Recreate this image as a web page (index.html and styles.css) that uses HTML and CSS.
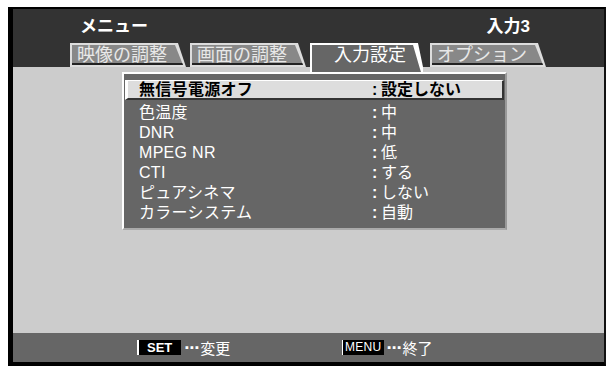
FILE: index.html
```html
<!DOCTYPE html>
<html lang="ja">
<head>
  <meta charset="UTF-8" />
  <title>メニュー</title>
  <link rel="stylesheet" href="styles.css">
</head>
<body>

<div class="screen">

  <!-- Title row -->
  <div class="header">
    <span class="title">メニュー</span>
    <span class="input">入力3</span>
  </div>

  <!-- Tabs -->
  <div class="tabs">
    <div class="tab"><span>映像の調整</span></div>
    <div class="tab"><span>画面の調整</span></div>
    <div class="tab active"><span>入力設定</span></div>
    <div class="tab"><span>オプション</span></div>
  </div>

  <!-- Settings list -->
  <div class="content">
    <div class="panel">
      <div class="row selected"><span class="name">無信号電源オフ</span><span class="colon">:</span><span>設定しない</span></div>
      <div class="row"><span class="name">色温度</span><span class="colon">:</span><span>中</span></div>
      <div class="row"><span class="name">DNR</span><span class="colon">:</span><span>中</span></div>
      <div class="row"><span class="name">MPEG NR</span><span class="colon">:</span><span>低</span></div>
      <div class="row"><span class="name">CTI</span><span class="colon">:</span><span>する</span></div>
      <div class="row"><span class="name">ピュアシネマ</span><span class="colon">:</span><span>しない</span></div>
      <div class="row"><span class="name">カラーシステム</span><span class="colon">:</span><span>自動</span></div>
    </div>
  </div>

  <!-- Key guide -->
  <div class="footer">
    <div class="hint"><span class="key set">SET</span><span class="dots">⋯</span>変更</div>
    <div class="hint"><span class="key menu">MENU</span><span class="dots">⋯</span>終了</div>
  </div>

</div>

</body>
</html>
```

FILE: styles.css
```css
body {
  margin: 0;
  background: #fff;
  font-family: "Liberation Sans", "Noto Sans CJK JP", sans-serif;
}

.screen {
  margin: 7px 0 0 8px;
  width: 591px;
  background: #333;
  border-left: 5px solid #000;
  border-top: 2px solid #000;
  border-right: 2px solid #111;
  border-bottom: 4px solid #000;
}

.header {
  display: flex;
  justify-content: space-between;
  align-items: center;
  height: 30px;
  padding: 0 74px 4px 67px;
  color: #fff;
  font-size: 17px;
  font-weight: bold;
}

/* Tabs */
.tabs {
  display: flex;
  gap: 4px;
  height: 24px;
  padding-left: 57px;
}

.tab {
  position: relative;
  width: 116px;
  height: 24px;
  color: #e8e8e8;
  font-size: 18px;
  line-height: 24px;
}

.tab::before,
.tab::after {
  content: "";
  position: absolute;
  clip-path: polygon(0 0, calc(100% - 8px) 0, 100% 100%, 0 100%);
}

.tab::before {
  inset: 0;
  background: #ddd;
}

.tab::after {
  top: 2px;
  left: 2px;
  right: 3px;
  bottom: 2px;
  background: #888;
  border-bottom: 2px solid #222;
}

.tab span {
  position: relative;
  z-index: 1;
  padding-left: 7px;
}

.tab.active {
  z-index: 1;
  height: 29px;
  margin-bottom: -5px;
  color: #fff;
}

.tab.active::before {
  clip-path: polygon(0 0, calc(100% - 8px) 0, calc(100% - 3px) 24px, calc(100% - 3px) 100%, 0 100%);
  background: #fff;
}

.tab.active::after {
  bottom: 0;
  right: 5px;
  border-bottom: 0;
  background: #666;
  clip-path: polygon(0 0, calc(100% - 8px) 0, calc(100% - 1px) 24px, 100% 100%, 0 100%);
}

.tab.active span {
  padding-left: 24px;
}

/* Light area with the settings panel */
.content {
  height: 261px;
  padding: 5px 0 0 109px;
  background: #ccc;
}

.panel {
  width: 379px;
  height: 148px;
  padding: 6px 1px 0 1px;
  background: #666;
  border-top: 2px solid #fff;
  border-left: 2px solid #fff;
  border-right: 2px solid #999;
  border-bottom: 2px solid #aaa;
}

.row {
  display: flex;
  height: 20px;
  line-height: 20px;
  padding-left: 14px;
  color: #fff;
  font-size: 16px;
}

.row .name {
  width: 233px;
  letter-spacing: 0.3px;
}

.row .colon {
  width: 9px;
  font-weight: bold;
}

.row.selected {
  height: 17px;
  line-height: 17px;
  margin-bottom: 3px;
  padding-left: 11px;
  background: #ddd;
  color: #000;
  font-weight: bold;
  border-top: 1px solid #fff;
  border-left: 3px solid #fff;
  border-right: 2px solid #333;
  border-bottom: 2px solid #333;
}

/* Footer key guide */
.footer {
  display: flex;
  align-items: center;
  height: 29px;
  padding-left: 124px;
  background: #666;
  color: #fff;
  font-size: 15px;
}

.hint {
  display: flex;
  align-items: center;
  width: 205px;
}

.key {
  display: inline-block;
  height: 15px;
  line-height: 15px;
  background: #000;
  font-weight: bold;
  font-size: 13px;
}

.key.set {
  border-left: 2px solid #fff;
  padding: 0 9px 0 8px;
}

.key.menu {
  border-left: 1px solid #fff;
  padding: 0 2px;
  font-weight: normal;
  font-size: 12px;
  letter-spacing: 0.3px;
}

.dots {
  margin: 0 1px 0 3px;
  font-family: "DejaVu Sans", sans-serif;
  font-weight: bold;
  font-size: 15px;
}
```
